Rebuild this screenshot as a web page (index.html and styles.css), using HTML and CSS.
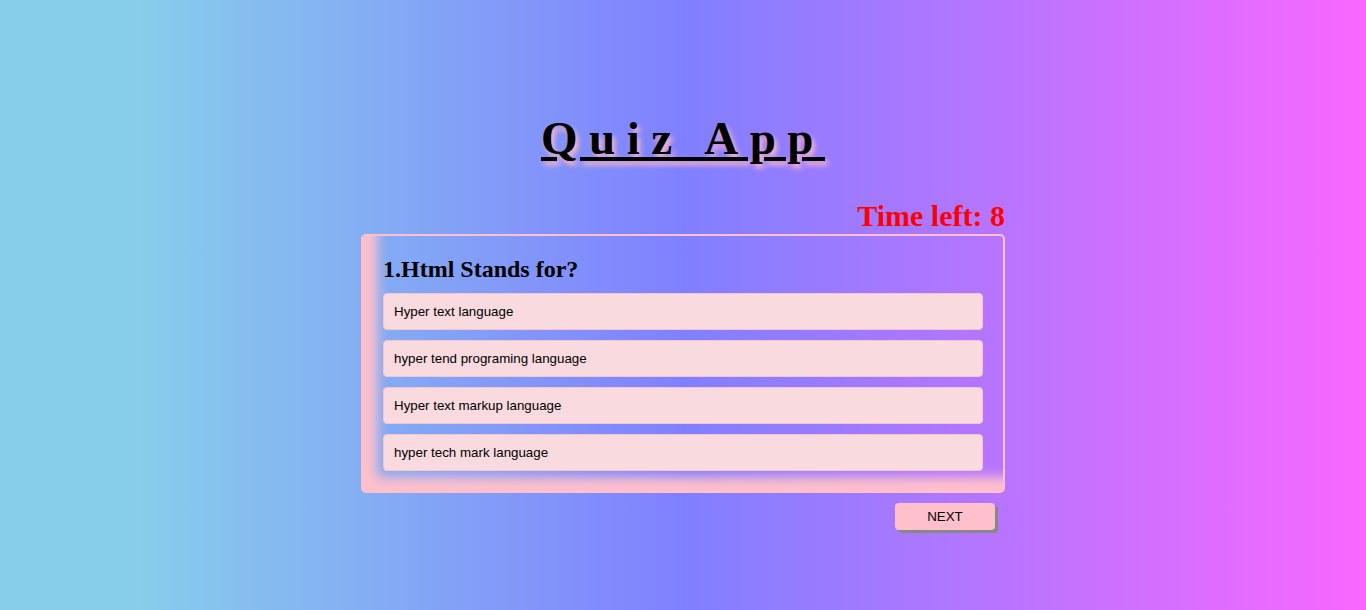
FILE: index.html
```html
<!DOCTYPE html>
<html>
<head>
<meta charset="utf-8">
<title>Quiz App</title>
<link rel="stylesheet" href="styles.css">
</head>
<body>
<main class="app">
  <h1 class="title">Quiz App</h1>
  <div class="quiz">
    <div class="timer">Time left: 8</div>
    <div class="card">
      <h2 class="question">1.Html Stands for?</h2>
      <div class="options">
        <button class="option">Hyper text language</button>
        <button class="option">hyper tend programing language</button>
        <button class="option">Hyper text markup language</button>
        <button class="option">hyper tech mark language</button>
      </div>
    </div>
    <div class="actions">
      <button class="next">NEXT</button>
    </div>
  </div>
</main>
</body>
</html>
```
FILE: styles.css
```css
html, body {
  margin: 0;
  height: 100%;
}
body {
  background: linear-gradient(to right, #87ceeb 10%, #8080ff 50%, #f967ff 100%);
  font-family: "Liberation Serif", "Times New Roman", serif;
}
.app {
  display: flex;
  flex-direction: column;
  align-items: center;
  padding-top: 111px;
}
.title {
  margin: 0;
  font-size: 47px;
  line-height: 54px;
  font-weight: bold;
  letter-spacing: 11.5px;
  text-decoration: underline;
  text-shadow: 3px 4px 5px #ffb6c1;
  color: #000;
}
.quiz {
  width: 644px;
  display: flex;
  flex-direction: column;
  margin-top: 35px;
}
.timer {
  align-self: flex-end;
  color: red;
  font-weight: bold;
  font-size: 30px;
  line-height: 32px;
  margin-bottom: 2px;
}
.card {
  box-sizing: border-box;
  border: 2px solid pink;
  border-radius: 5px;
  padding: 20px;
  box-shadow: inset 14px -14px 12px pink;
}
.question {
  margin: 0 0 10px;
  font-size: 24px;
  font-weight: bold;
}
.options {
  display: flex;
  flex-direction: column;
  gap: 10px;
}
.option {
  text-align: left;
  height: 37px;
  padding: 0 10px;
  background: #f8dadf;
  border: 1px solid #f6c4cc;
  border-radius: 4px;
  font-family: "Liberation Sans", Arial, sans-serif;
  font-size: 13.333px;
  color: #000;
}
.actions {
  display: flex;
  justify-content: flex-end;
  padding: 10px 10px 0;
}
.next {
  width: 100px;
  height: 27px;
  background: pink;
  border: none;
  border-radius: 4px;
  box-shadow: 3px 3px 0 #888;
  font-family: "Liberation Sans", Arial, sans-serif;
  font-size: 13.333px;
  color: #000;
}
```
